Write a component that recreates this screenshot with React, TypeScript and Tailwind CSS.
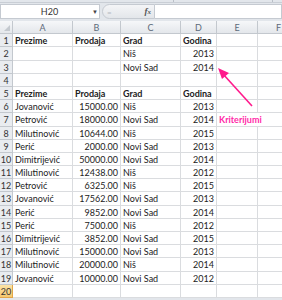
const rows: [string, string, string, string][] = [
  ['Prezime', 'Prodaja', 'Grad', 'Godina'],
  ['', '', 'Niš', '2013'],
  ['', '', 'Novi Sad', '2014'],
  ['', '', '', ''],
  ['Prezime', 'Prodaja', 'Grad', 'Godina'],
  ['Jovanović', '15000.00', 'Niš', '2013'],
  ['Petrović', '18000.00', 'Novi Sad', '2014'],
  ['Milutinović', '10644.00', 'Niš', '2015'],
  ['Perić', '2000.00', 'Novi Sad', '2013'],
  ['Dimitrijević', '50000.00', 'Novi Sad', '2014'],
  ['Milutinović', '12438.00', 'Niš', '2012'],
  ['Petrović', '6325.00', 'Niš', '2015'],
  ['Jovanović', '17562.00', 'Novi Sad', '2013'],
  ['Perić', '9852.00', 'Novi Sad', '2014'],
  ['Perić', '7500.00', 'Niš', '2012'],
  ['Dimitrijević', '3852.00', 'Novi Sad', '2015'],
  ['Milutinović', '15000.00', 'Novi Sad', '2013'],
  ['Milutinović', '20000.00', 'Niš', '2014'],
  ['Jovanović', '10000.00', 'Novi Sad', '2012'],
  ['', '', '', ''],
];

const cell = 'border-r border-b border-[#dadcdf] px-[2px] leading-[13px] whitespace-nowrap overflow-hidden';
const head = 'border-r border-b border-[#c3c8ce] bg-gradient-to-b from-[#f6f7f9] to-[#e4e7eb] text-center leading-[13px] text-[#5d6a7a]';

export default function App() {
  return (
    <div className="relative h-[300px] w-[282px] overflow-hidden bg-[#e2e6eb] font-['Lato','Liberation_Sans',sans-serif] text-[9px] text-[#222]">
      {/* ribbon remnant */}
      <div className="flex h-[3px] border-b border-[#c9ced5]">
        <div className="w-[174px] border-r border-[#b9bfc7]" />
        <div className="w-[99px] border-r border-[#b9bfc7]" />
      </div>

      {/* formula bar */}
      <div className="mt-[1px] flex h-[15px] items-stretch">
        <div className="flex w-[100px] items-center border border-[#c5cad1] bg-white">
          <span className="flex-1 pl-[6px] text-center text-[9px] text-[#333]">H20</span>
          <span className="mr-[1px] text-[6px] text-[#444]">▼</span>
        </div>
        <div className="ml-[2px] flex w-[53px] items-center rounded-l-full border border-[#c5cad1] bg-gradient-to-b from-[#f4f5f7] to-[#e3e6ea]">
          <span className="ml-[4px] text-[8px] text-[#b5bac1]">=</span>
          <span className="ml-auto mr-[3px] font-['Liberation_Serif',serif] text-[9px] font-bold italic text-[#555]">
            f<span className="text-[7px]">x</span>
          </span>
        </div>
        <div className="flex-1 border border-l-0 border-[#c5cad1] bg-white" />
      </div>

      {/* sheet */}
      <div className="mt-[2px] grid grid-cols-[13px_60px_48px_60px_36px_41px_42px] auto-rows-[13.2px] bg-white">
        <div className={`${head} relative`}>
          <span className="absolute bottom-[2px] right-[2px] h-0 w-0 border-b-[6px] border-l-[6px] border-b-[#c4c9cf] border-l-transparent" />
        </div>
        {['A', 'B', 'C', 'D', 'E', 'F'].map((c) => (
          <div key={c} className={head}>
            {c}
          </div>
        ))}

        {rows.map((r, i) => {
          const n = i + 1;
          const bold = n === 1 || n === 5;
          const sel = n === 20;
          return [
            <div
              key={`h${n}`}
              className={
                sel
                  ? 'border-r border-b border-[#e2a64a] bg-gradient-to-b from-[#fbe3a6] to-[#f6c86e] text-center leading-[13px] text-[#333]'
                  : 'border-r border-b border-[#c3c8ce] bg-[#e9ecf0] text-center leading-[13px] text-[#333]'
              }
            >
              {n}
            </div>,
            <div key={`a${n}`} className={`${cell} ${bold ? 'font-bold' : ''}`}>
              {r[0]}
            </div>,
            <div key={`b${n}`} className={`${cell} ${bold ? 'font-bold' : 'text-right'}`}>
              {r[1]}
            </div>,
            <div key={`c${n}`} className={`${cell} ${bold ? 'font-bold' : ''}`}>
              {r[2]}
            </div>,
            <div key={`d${n}`} className={`${cell} ${bold ? 'font-bold' : 'text-right'}`}>
              {r[3]}
            </div>,
            n === 7 ? (
              <div
                key={`e${n}`}
                className="relative z-10 border-b border-[#dadcdf] px-[2px] font-bold leading-[13px] whitespace-nowrap text-[#ff2aa8]"
              >
                Kriterijumi
              </div>
            ) : (
              <div key={`e${n}`} className={cell} />
            ),
            <div key={`f${n}`} className={cell} />,
          ];
        })}
      </div>

      {/* annotation arrow */}
      <svg className="pointer-events-none absolute left-0 top-0" width="282" height="300">
        <line x1="252" y1="106" x2="223" y2="74" stroke="#ff1a8c" strokeWidth="1.6" />
        <polygon points="218,68 229,73 222,79" fill="#ff1a8c" />
      </svg>
    </div>
  );
}
